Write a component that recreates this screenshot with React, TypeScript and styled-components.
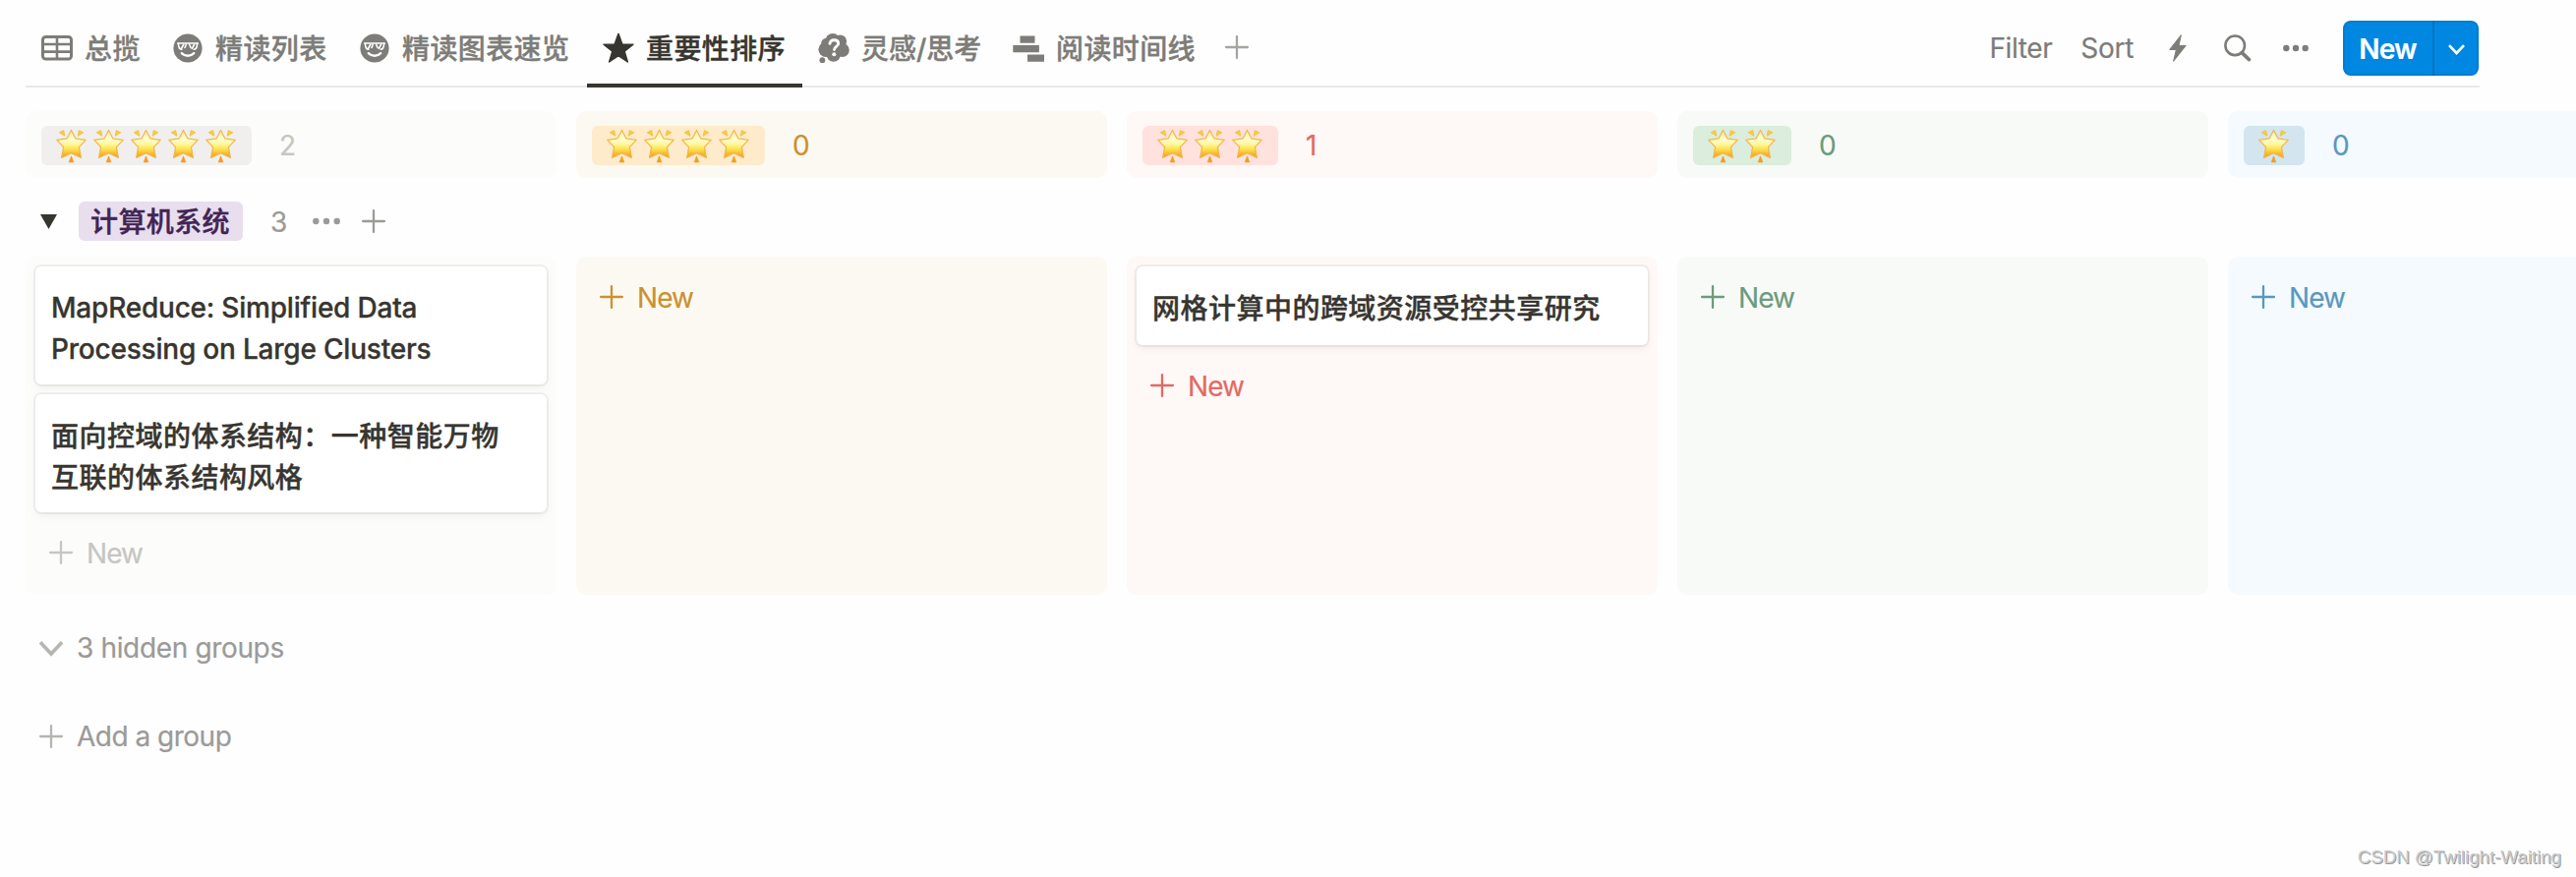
import React, { useId } from "react";
import styled, { createGlobalStyle } from "styled-components";

const GlobalStyle = createGlobalStyle`
  *, *::before, *::after { box-sizing: border-box; }
  body {
    margin: 0;
    background: #fff;
    color: #37352f;
    font-family: Inter, "Noto Sans CJK SC", sans-serif;
    font-size: 28px;
    line-height: 42px;
    overflow: hidden;
    -webkit-text-stroke: 0.2px currentColor;
  }
  svg { display: block; flex: none; overflow: visible; }
`;

const Page = styled.main`
  position: relative;
  width: 2620px;
  height: 892px;
  padding-left: 26px;
  overflow: hidden;
  background: #fefefe;
`;

const TopBar = styled.header`
  display: flex;
  justify-content: space-between;
  width: 2496px;
  height: 89px;
  border-bottom: 2px solid #e9e9e8;
`;

const TabList = styled.nav`
  display: flex;
  height: 89px;
`;

const Tab = styled.button<{ $active?: boolean; $width: number }>`
  display: flex;
  align-items: center;
  gap: 12px;
  width: ${(p) => p.$width}px;
  height: 89px;
  padding: 12px 0 0 16px;
  border: 0;
  border-bottom: 4px solid ${(p) => (p.$active ? "#37352f" : "transparent")};
  background: none;
  color: ${(p) => (p.$active ? "#37352f" : "#7d7c78")};
`;

const TabLabel = styled.span<{ $spacing: number }>`
  padding-top: 2px;
  font: 500 28px/42px Inter, "Noto Sans CJK SC", sans-serif;
  letter-spacing: ${(p) => p.$spacing}px;
  white-space: nowrap;
  -webkit-text-stroke: 0.4px currentColor;
`;

const AddTab = styled.div`
  display: flex;
  align-items: center;
  height: 89px;
  padding: 7px 0 0 14px;
  color: #a5a4a1;
`;

const Tools = styled.div`
  display: flex;
  align-items: center;
  height: 98px;
  color: #7d7c78;
`;

const ToolText = styled.span<{ $gap: number; $spacing: number }>`
  margin-right: ${(p) => p.$gap}px;
  letter-spacing: ${(p) => p.$spacing}px;
`;

const ToolIcon = styled.span<{ $gap: number }>`
  margin-right: ${(p) => p.$gap}px;
`;

const SplitButton = styled.div`
  display: flex;
  width: 138px;
  height: 56px;
  margin-right: 1px;
  border-radius: 8px;
  background: #0087e1;
  box-shadow: inset 0 0 0 2px rgba(15, 15, 15, 0.08);
  color: #fff;
`;

const SplitMain = styled.span`
  display: flex;
  align-items: center;
  justify-content: center;
  width: 93px;
  padding-top: 2px;
  border-right: 2px solid rgba(15, 15, 15, 0.14);
  font-weight: 600;
  letter-spacing: -0.8px;
`;

const SplitCaret = styled.span`
  display: flex;
  flex: 1;
  align-items: center;
  justify-content: center;
  padding-top: 2px;
`;

const Columns = styled.div<{ $top: number }>`
  display: flex;
  gap: 20px;
  margin-top: ${(p) => p.$top}px;
`;

const ColumnHead = styled.div<{ $bg: string; $fg: string }>`
  display: flex;
  flex: none;
  align-items: center;
  gap: 28px;
  width: 540px;
  height: 68px;
  padding: 2px 16px 0;
  border-radius: 10px;
  background: ${(p) => p.$bg};
  color: ${(p) => p.$fg};
`;

const StarTag = styled.span<{ $bg: string }>`
  display: flex;
  align-items: center;
  height: 40px;
  padding: 0 12px;
  border-radius: 6px;
  background: ${(p) => p.$bg};
`;

const StarSlot = styled.span`
  display: flex;
  justify-content: center;
  width: 38px;
  padding-right: 1px;
`;

const GroupRow = styled.div`
  display: flex;
  align-items: center;
  height: 40px;
  margin-top: 24px;
  padding-left: 15px;
  color: #9b9a97;
`;

const GroupTag = styled.span`
  width: 167px;
  height: 40px;
  margin: 0 28px 0 22px;
  padding: 1px 0 0 12px;
  border-radius: 6px;
  background: #e8deee;
  color: #412454;
  font-weight: 500;
  line-height: 40px;
  letter-spacing: 0.4px;
  white-space: nowrap;
  -webkit-text-stroke: 0.4px currentColor;
`;

const GroupCount = styled.span`
  width: 43px;
  padding-top: 1px;
`;

const ColumnBody = styled.section<{ $bg: string }>`
  display: flex;
  flex: none;
  flex-direction: column;
  gap: 10px;
  width: 540px;
  height: 344px;
  padding: 10px;
  border-radius: 10px;
  background: ${(p) => p.$bg};
`;

const Card = styled.article<{ $tall?: boolean }>`
  height: ${(p) => (p.$tall ? 120 : 80)}px;
  padding: 21px 16px 0;
  border-radius: 6px;
  background: #fff;
  box-shadow: 0 0 0 2px rgba(15, 15, 15, 0.05), 0 4px 8px rgba(15, 15, 15, 0.05);
  font-weight: 500;
`;

const CardLine = styled.div<{ $cjk: boolean }>`
  padding-top: ${(p) => (p.$cjk ? 1 : 0)}px;
  height: 42px;
  letter-spacing: ${(p) => (p.$cjk ? 0.48 : -0.21)}px;
  white-space: nowrap;
  -webkit-text-stroke: ${(p) => (p.$cjk ? 0.4 : 0.3)}px currentColor;
`;

const NewRow = styled.div<{ $fg: string }>`
  display: flex;
  align-items: center;
  gap: 14px;
  height: 62px;
  padding-left: 14px;
  color: ${(p) => p.$fg};
`;

const NewLabel = styled.span`
  padding-top: 2px;
  letter-spacing: -0.9px;
`;

const FooterRow = styled.div<{ $top: number; $spacing: number }>`
  display: flex;
  align-items: center;
  gap: 14px;
  height: 50px;
  margin-top: ${(p) => p.$top}px;
  padding-left: 14px;
  color: #9b9a97;
  letter-spacing: ${(p) => p.$spacing}px;
`;

const FaintIcon = styled.span`
  color: #b6b5b2;
`;

const Watermark = styled.div`
  position: absolute;
  right: 15px;
  bottom: 7px;
  color: #cbcbcb;
  font: 18.7px/26px "Liberation Sans", sans-serif;
  text-shadow: 1px 1px 0 #999;
  -webkit-text-stroke: 0;
`;

const Plus = () => (
  <svg width="24" height="24" viewBox="0 0 24 24" stroke="currentColor" strokeWidth="2.3" strokeLinecap="round">
    <path d="M12 1.1v21.8M1.1 12h21.8" />
  </svg>
);

const Dots = ({ width }: { width: number }) => (
  <svg width={width} height="8" viewBox={`0 0 ${width} 8`} fill="currentColor">
    <circle cx="3.3" cy="4" r="3.2" />
    <circle cx={width / 2} cy="4" r="3.2" />
    <circle cx={width - 3.3} cy="4" r="3.2" />
  </svg>
);

const Chevron = ({ w, h, stroke }: { w: number; h: number; stroke: number }) => (
  <svg width={w} height={h} viewBox={`0 0 ${w} ${h}`} fill="none" stroke="currentColor" strokeWidth={stroke}>
    <path d={`M1 1.2L${w / 2} ${h - 2}L${w - 1} 1.2`} />
  </svg>
);

const TableIcon = () => (
  <svg width="32" height="32" viewBox="0 0 32 32" fill="none" stroke="currentColor" strokeWidth="2.6">
    <rect x="1.5" y="4.5" width="29" height="22.5" rx="3" strokeWidth="3" />
    <path d="M1.5 12h29M1.5 19.6h29M16 4.5V27" />
  </svg>
);

const FaceIcon = () => (
  <svg width="32" height="32" viewBox="0 0 32 32">
    <circle cx="16" cy="16" r="14.6" fill="currentColor" />
    <path
      d="M5.6 11.1h20.8M6.2 11.1l.7 3.4c.4 1.9 1.4 2.7 3 2.7M25.8 11.1l-.7 3.4c-.4 1.9-1.4 2.7-3 2.7M14.2 12.5c-.3 1.2-.7 2.2-1.3 3M17.8 12.5c.3 1.2.7 2.2 1.3 3"
      fill="none"
      stroke="#fff"
      strokeWidth="1.5"
      strokeLinecap="round"
    />
    <path d="M9.2 16.8l2.8-5M20 16.8l2.8-5" stroke="#fff" strokeWidth="1.7" />
    <path d="M9.8 21.2c3.4 3.4 9 3.4 12.4 0" fill="none" stroke="#fff" strokeWidth="2.4" strokeLinecap="round" />
  </svg>
);

const StarIcon = () => (
  <svg width="32" height="32" viewBox="0 0 32 32" fill="currentColor" stroke="currentColor" strokeWidth="1.4" strokeLinejoin="round">
    <path d="M16 1.3L19.9 11.9L31 12.3L22.2 19.2L25.4 30L16 23.7L6.6 30L9.8 19.2L1 12.3L12.1 11.9Z" />
  </svg>
);

const ThoughtIcon = () => (
  <svg width="32" height="32" viewBox="0 0 32 32" fill="currentColor">
    <circle cx="15" cy="8.6" r="7.6" />
    <circle cx="22.5" cy="9" r="6.6" />
    <circle cx="24.7" cy="18" r="7.1" />
    <circle cx="8" cy="17.3" r="7.6" />
    <circle cx="15.8" cy="22.6" r="7.2" />
    <circle cx="8.2" cy="11" r="5" />
    <circle cx="16" cy="15.5" r="8.5" />
    <circle cx="4.4" cy="28.2" r="2.9" />
    <path d="M12 11.2c.4-2.3 2-3.5 4.3-3.5 2.6 0 4.4 1.4 4.4 3.6 0 3.2-4.2 3.1-4.2 6.3" fill="none" stroke="#fff" strokeWidth="2.9" strokeLinecap="round" />
    <circle cx="16.3" cy="22.2" r="2" fill="#fff" />
  </svg>
);

const TimelineIcon = () => (
  <svg width="32" height="32" viewBox="0 0 32 32" fill="currentColor">
    <path d="M7.5 3.5h15v7.2h-15zM.3 13h26.6v7.2H.3zM15 22.5h17v7.2H15z" />
  </svg>
);

const BoltIcon = () => (
  <svg width="18" height="28" viewBox="0 0 18 28" fill="currentColor" stroke="currentColor" strokeWidth="1" strokeLinejoin="round">
    <path d="M12.3.7L.7 15.4H7.4L4.6 27.3L17.2 11.4H10Z" />
  </svg>
);

const SearchIcon = () => (
  <svg width="28" height="28" viewBox="0 0 28 28" fill="none" stroke="currentColor">
    <circle cx="11.2" cy="11.3" r="9.8" strokeWidth="2.6" />
    <path d="M18.2 18.6L25.5 25.6" strokeWidth="3.6" strokeLinecap="round" />
  </svg>
);

const Triangle = () => (
  <svg width="17" height="15" viewBox="0 0 17 15" fill="#37352f">
    <path d="M0 0h17L8.5 15z" />
  </svg>
);

const GlowingStar = () => {
  const id = useId();
  return (
    <svg width="31" height="35" viewBox="0 0 31 35">
      <defs>
        <linearGradient id={id} x1="0" y1="0" x2="0" y2="1">
          <stop offset="0" stopColor="#fff0a0" />
          <stop offset="0.32" stopColor="#fffccf" />
          <stop offset="0.52" stopColor="#fff79c" />
          <stop offset="0.7" stopColor="#fde046" />
          <stop offset="1" stopColor="#f0922a" />
        </linearGradient>
      </defs>
      <path
        d="M15.5 1.4L19.8 9.8L30.2 11.3L23.4 18.6L25.4 29.4L15.5 24.7L5.6 29.4L7.6 18.6L.8 11.3L11.2 9.8Z"
        fill={`url(#${id})`}
        stroke="#f3b548"
        strokeWidth="1.2"
        strokeLinejoin="round"
      />
      <path d="M3.5 3.7L8.7 7L7.6 1.8Z M27.5 3.7L22.3 7L23.4 1.8Z" fill="#f5cf45" stroke="#f3c545" strokeWidth="1.2" strokeLinejoin="round" />
      <path d="M15.5 27.8L17.9 34H13.1Z" fill="#f39c22" stroke="#f39c28" strokeWidth=".6" strokeLinejoin="round" />
    </svg>
  );
};

type CardData = { lines: string[]; cjk: boolean };
type Column = { stars: number; count: number; bg: string; tag: string; fg: string; cards: CardData[] };

const columns: Column[] = [
  {
    stars: 5, count: 2, bg: "#fcfcfa", tag: "#f0efee", fg: "#c6c5c2",
    cards: [
      { lines: ["MapReduce: Simplified Data", "Processing on Large Clusters"], cjk: false },
      { lines: ["面向控域的体系结构：一种智能万物", "互联的体系结构风格"], cjk: true },
    ],
  },
  { stars: 4, count: 0, bg: "#fcf9f2", tag: "#fdebcb", fg: "#cb912f", cards: [] },
  {
    stars: 3, count: 1, bg: "#fef8f6", tag: "#ffe2dd", fg: "#e16b64",
    cards: [{ lines: ["网格计算中的跨域资源受控共享研究"], cjk: true }],
  },
  { stars: 2, count: 0, bg: "#f8faf7", tag: "#dbeddc", fg: "#6c9b7d", cards: [] },
  { stars: 1, count: 0, bg: "#f4fafd", tag: "#d3e5ef", fg: "#5b97bd", cards: [] },
];

const tabs = [
  { label: "总揽", icon: <TableIcon />, width: 133 },
  { label: "精读列表", icon: <FaceIcon />, width: 190 },
  { label: "精读图表速览", icon: <FaceIcon />, width: 248 },
  { label: "重要性排序", icon: <StarIcon />, width: 219, active: true },
  { label: "灵感/思考", icon: <ThoughtIcon />, width: 198, spacing: 0 },
  { label: "阅读时间线", icon: <TimelineIcon />, width: 218 },
];

export default function App() {
  return (
    <>
      <GlobalStyle />
      <Page>
        <TopBar>
          <TabList>
            {tabs.map((t) => (
              <Tab key={t.label} $active={t.active} $width={t.width}>
                {t.icon}
                <TabLabel $spacing={t.spacing ?? 0.4}>{t.label}</TabLabel>
              </Tab>
            ))}
            <AddTab><Plus /></AddTab>
          </TabList>
          <Tools>
            <ToolText $gap={29} $spacing={-0.4}>Filter</ToolText>
            <ToolText $gap={36} $spacing={-0.3}>Sort</ToolText>
            <ToolIcon $gap={38}><BoltIcon /></ToolIcon>
            <ToolIcon $gap={32}><SearchIcon /></ToolIcon>
            <ToolIcon $gap={35}><Dots width={26} /></ToolIcon>
            <SplitButton>
              <SplitMain>New</SplitMain>
              <SplitCaret><Chevron w={17} h={11} stroke={2.6} /></SplitCaret>
            </SplitButton>
          </Tools>
        </TopBar>

        <Columns $top={24}>
          {columns.map((c) => (
            <ColumnHead key={c.stars} $bg={c.bg} $fg={c.fg}>
              <StarTag $bg={c.tag}>
                {Array.from({ length: c.stars }, (_, i) => (
                  <StarSlot key={i}><GlowingStar /></StarSlot>
                ))}
              </StarTag>
              {c.count}
            </ColumnHead>
          ))}
        </Columns>

        <GroupRow>
          <Triangle />
          <GroupTag>计算机系统</GroupTag>
          <GroupCount>3</GroupCount>
          <ToolIcon $gap={22}><Dots width={28} /></ToolIcon>
          <Plus />
        </GroupRow>

        <Columns $top={16}>
          {columns.map((c) => (
            <ColumnBody key={c.stars} $bg={c.bg}>
              {c.cards.map((card) => (
                <Card key={card.lines[0]} $tall={card.lines.length > 1}>
                  {card.lines.map((text) => (
                    <CardLine key={text} $cjk={card.cjk}>{text}</CardLine>
                  ))}
                </Card>
              ))}
              <NewRow $fg={c.fg}>
                <Plus />
                <NewLabel>New</NewLabel>
              </NewRow>
            </ColumnBody>
          ))}
        </Columns>

        <FooterRow $top={29} $spacing={-0.35}>
          <FaintIcon><Chevron w={24} h={15} stroke={3.6} /></FaintIcon>
          3 hidden groups
        </FooterRow>
        <FooterRow $top={40} $spacing={-0.5}>
          <FaintIcon><Plus /></FaintIcon>
          Add a group
        </FooterRow>
        <Watermark>CSDN @Twilight-Waiting</Watermark>
      </Page>
    </>
  );
}
